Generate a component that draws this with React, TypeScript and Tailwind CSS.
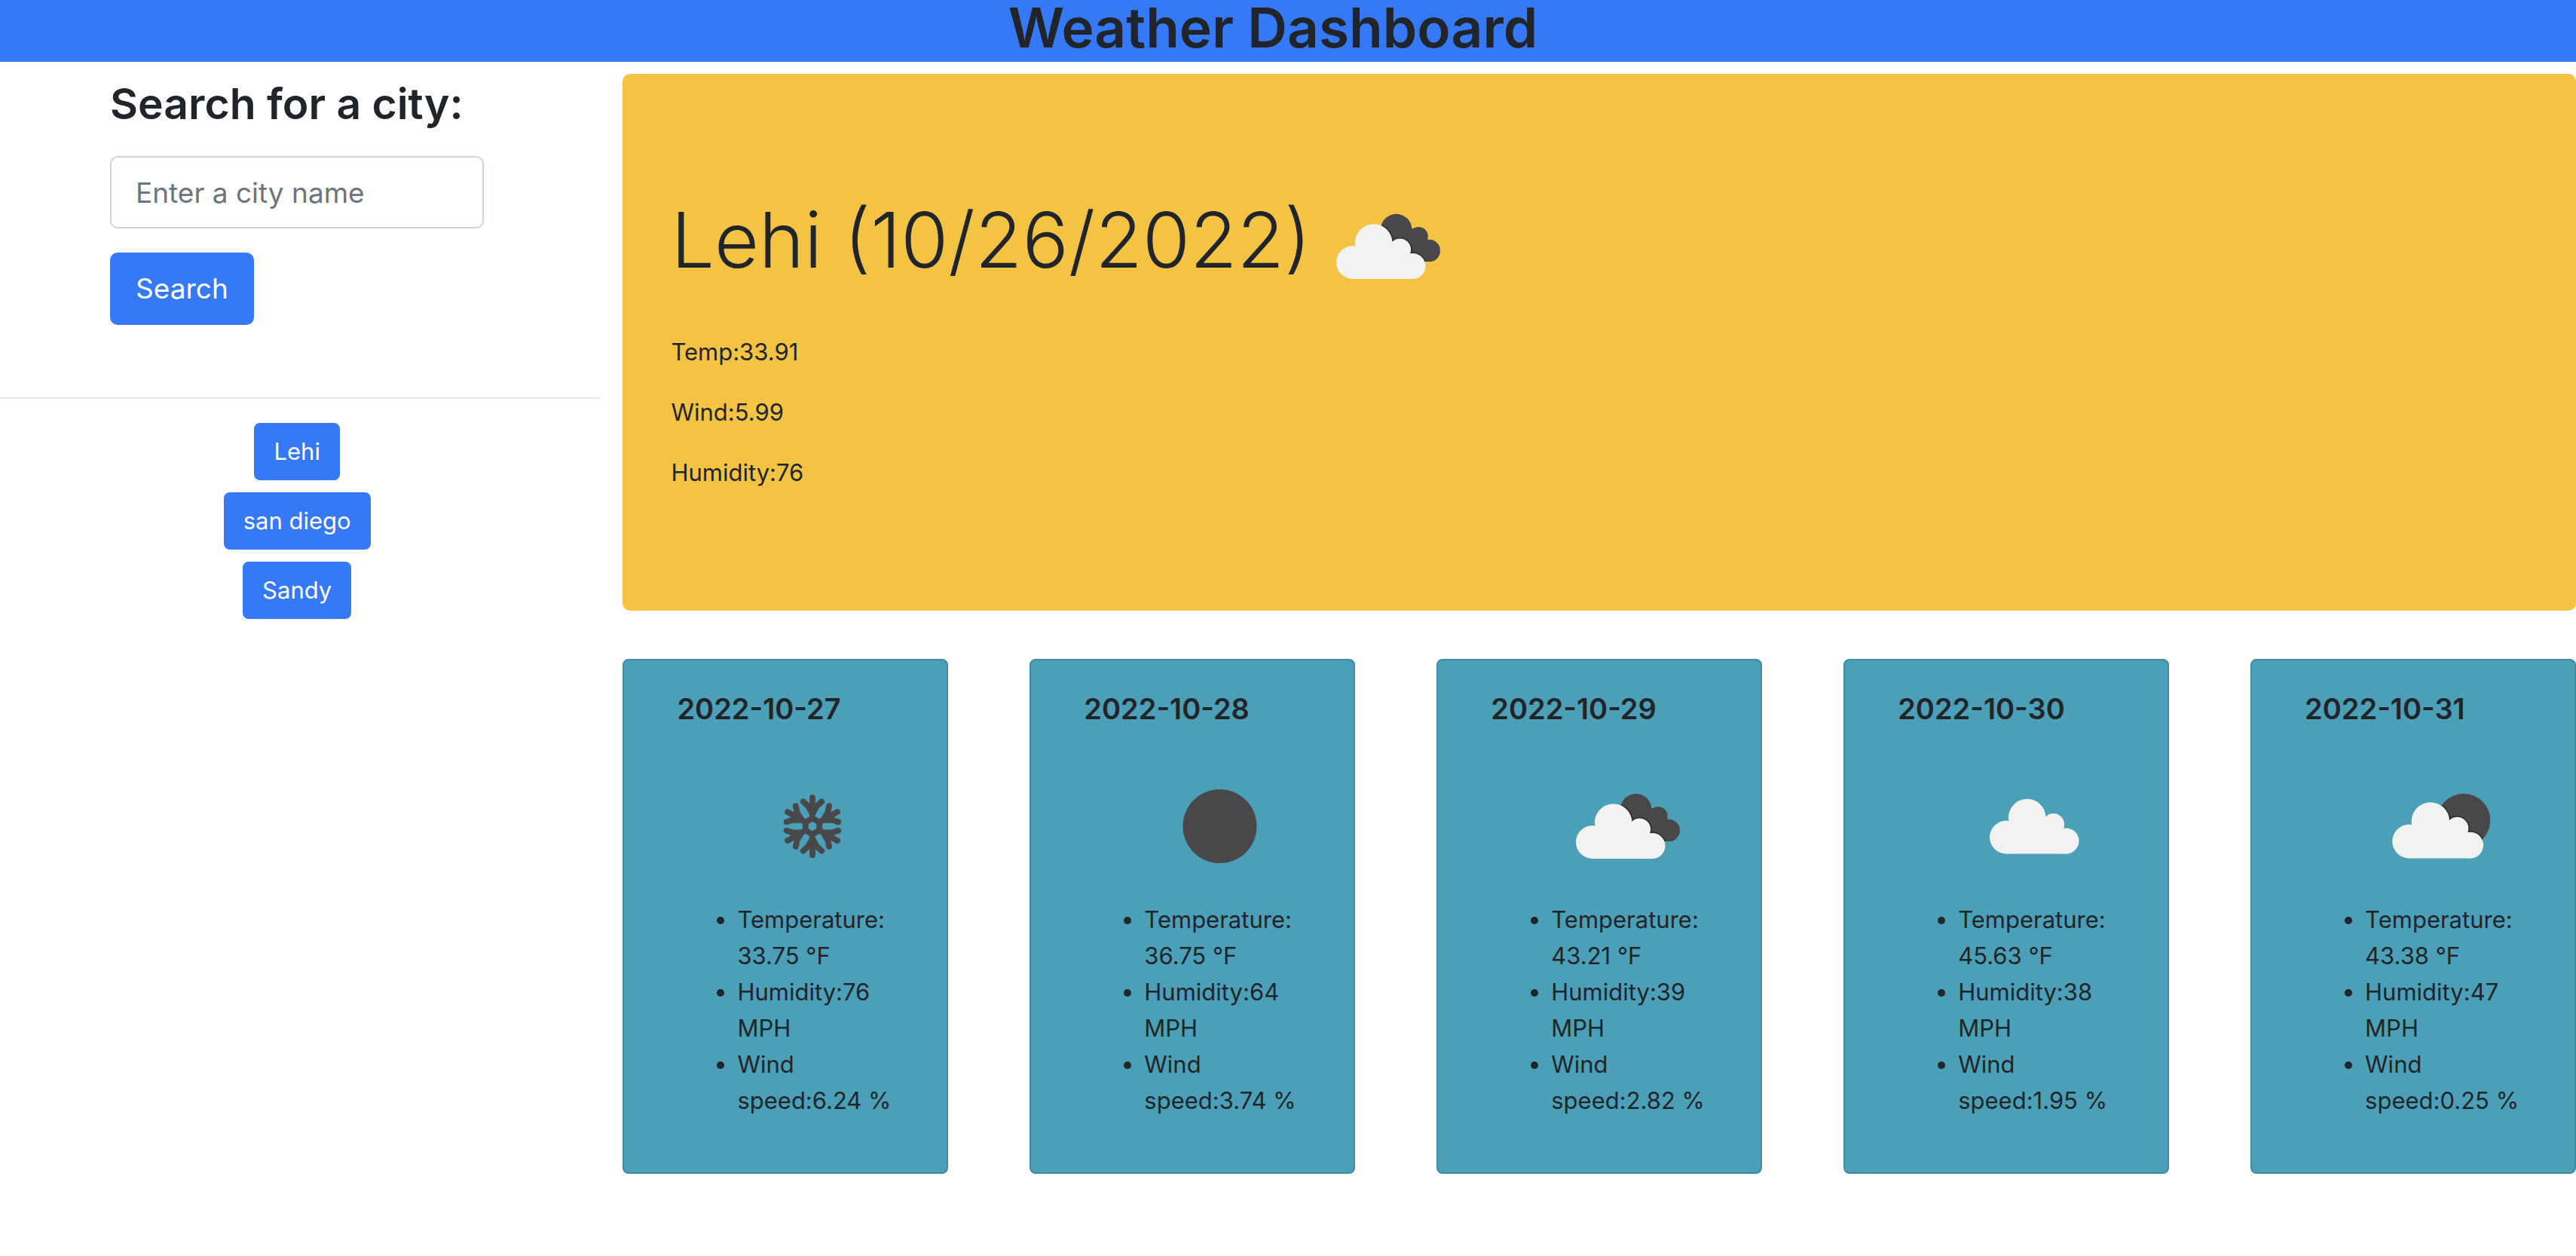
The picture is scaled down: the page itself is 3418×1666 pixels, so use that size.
import React, { useId } from "react";

type IconName = "snow" | "clear" | "broken" | "cloud" | "few";

function CloudShape() {
  return (
    <>
      <circle cx="53" cy="121" r="22" />
      <circle cx="80.7" cy="95" r="24.8" />
      <circle cx="115.5" cy="104" r="14.6" />
      <circle cx="132.5" cy="126" r="17" />
      <path d="M53 121 57 100 80 92 110 98 124 112 134 126V143H53Z" />
    </>
  );
}

function BackClouds() {
  return (
    <>
      <circle cx="112.7" cy="77.5" r="20.7" />
      <circle cx="142.3" cy="86.5" r="12.5" />
      <circle cx="156.3" cy="105.5" r="14.7" />
      <path d="M112 77 131 75 144 80 156 98V120H142L107 98Z" />
    </>
  );
}

function SnowArm({ angle }: { angle: number }) {
  return <path d="M0-10V-37.4M-12-32 0-21 12-32M-6-27 0-16 6-27" transform={`rotate(${angle})`} />;
}

const frontTransform: Record<IconName, string | undefined> = {
  snow: undefined,
  clear: undefined,
  broken: "translate(2 0)",
  cloud: "translate(11 -6.5)",
  few: "translate(4.6 -3.4) scale(1.02)",
};

function WeatherIcon({ name, label }: { name: IconName; label: string }) {
  const clip = useId();
  const back = name === "broken" ? <BackClouds /> : <circle cx="131" cy="92" r="35.3" />;
  const front = frontTransform[name];
  return (
    <svg
      viewBox="0 0 200 200"
      role="img"
      aria-label={label}
      className="inline-block size-[200px] shrink-0 align-middle"
    >
      {name === "clear" && <circle cx="100.5" cy="100" r="49" fill="#48484a" />}
      {name === "snow" && (
        <g
          transform="translate(100 100) scale(1.02)"
          fill="none"
          stroke="#48484a"
          strokeWidth="7.6"
          strokeLinecap="round"
          strokeLinejoin="round"
        >
          <path d="M0-10.4 9-5.2V5.2L0 10.4-9 5.2V-5.2Z" />
          {[0, 60, 120, 180, 240, 300].map((a) => (
            <SnowArm key={a} angle={a} />
          ))}
        </g>
      )}
      {(name === "broken" || name === "few") && (
        <>
          <clipPath id={clip}>{back}</clipPath>
          <g fill="#48484a">{back}</g>
          <g clipPath={`url(#${clip})`}>
            <g transform={front} fill="#2b2b2d" stroke="#2b2b2d" strokeWidth="3">
              <CloudShape />
            </g>
          </g>
        </>
      )}
      {(name === "broken" || name === "few" || name === "cloud") && (
        <g transform={front} fill="#f2f2f0">
          <CloudShape />
        </g>
      )}
    </svg>
  );
}

const cities = ["Lehi", "san diego", "Sandy"];

const forecast: {
  date: string;
  icon: IconName;
  label: string;
  temp: string;
  humidity: string;
  wind: string;
}[] = [
  { date: "2022-10-27", icon: "snow", label: "Snow", temp: "33.75", humidity: "76", wind: "6.24" },
  { date: "2022-10-28", icon: "clear", label: "Clear", temp: "36.75", humidity: "64", wind: "3.74" },
  { date: "2022-10-29", icon: "broken", label: "Broken clouds", temp: "43.21", humidity: "39", wind: "2.82" },
  { date: "2022-10-30", icon: "cloud", label: "Cloudy", temp: "45.63", humidity: "38", wind: "1.95" },
  { date: "2022-10-31", icon: "few", label: "Few clouds", temp: "43.38", humidity: "47", wind: "0.25" },
];

export default function App() {
  return (
    <div className="min-h-screen bg-white font-['Inter',sans-serif] text-[31px] leading-[48px] text-[#212529]">
      <header className="bg-[#3579f7] pr-10 pb-2">
        <h1 className="text-center text-[73px] leading-[74px] font-semibold">Weather Dashboard</h1>
      </header>

      <div className="flex items-start gap-[30px] pt-4">
        <aside className="w-[23.3%] shrink-0">
          <form className="pr-[154px] pl-[146px]" onSubmit={(e) => e.preventDefault()}>
            <h2 className="text-[57px] leading-[80px] font-semibold whitespace-nowrap">
              <label htmlFor="city">Search for a city:</label>
            </h2>
            <input
              id="city"
              type="text"
              placeholder="Enter a city name"
              className="mt-[29px] block h-24 w-full rounded-[10px] border-2 border-[#ced4da] bg-white px-8 text-[37px] placeholder:text-[#6c757d]"
            />
            <button
              type="submit"
              className="mt-8 block h-24 rounded-[10px] border-2 border-[#3579f7] bg-[#3579f7] px-8 text-[37px] text-white"
            >
              Search
            </button>
          </form>

          <hr className="mt-24 border-t-2 border-[#e5e5e5]" />

          <div className="mt-8 flex flex-col items-center gap-4 pr-2">
            {cities.map((city) => (
              <button
                key={city}
                type="button"
                className="h-[76px] rounded-lg border-2 border-[#3579f7] bg-[#3579f7] px-6 text-white"
              >
                {city}
              </button>
            ))}
          </div>
        </aside>

        <main className="min-w-0 flex-1">
          <section className="rounded-[10px] bg-[#f4c343] px-16 pt-[129px] pb-[159px]">
            <h2 className="text-[102px] leading-[134px] font-light">
              Lehi (10/26/2022)
              <WeatherIcon name="broken" label="Broken clouds" />
            </h2>
            <div className="mt-4 flex flex-col gap-8">
              <p>Temp:33.91</p>
              <p>Wind:5.99</p>
              <p>Humidity:76</p>
            </div>
          </section>

          <section className="mt-16 flex justify-between">
            {forecast.map((day) => (
              <article
                key={day.date}
                className="w-1/6 rounded-lg border-2 border-[#418c9f] bg-[#4b9fb6] px-[70px] pt-10 pb-[71px]"
              >
                <h3 className="text-[38px] leading-[48px] font-semibold whitespace-nowrap">{day.date}</h3>
                <div className="mt-8 pl-20">
                  <WeatherIcon name={day.icon} label={day.label} />
                </div>
                <ul className="list-disc pl-20">
                  <li>Temperature: {day.temp} °F</li>
                  <li>Humidity:{day.humidity} MPH</li>
                  <li>Wind speed:{day.wind} %</li>
                </ul>
              </article>
            ))}
          </section>
        </main>
      </div>
    </div>
  );
}
